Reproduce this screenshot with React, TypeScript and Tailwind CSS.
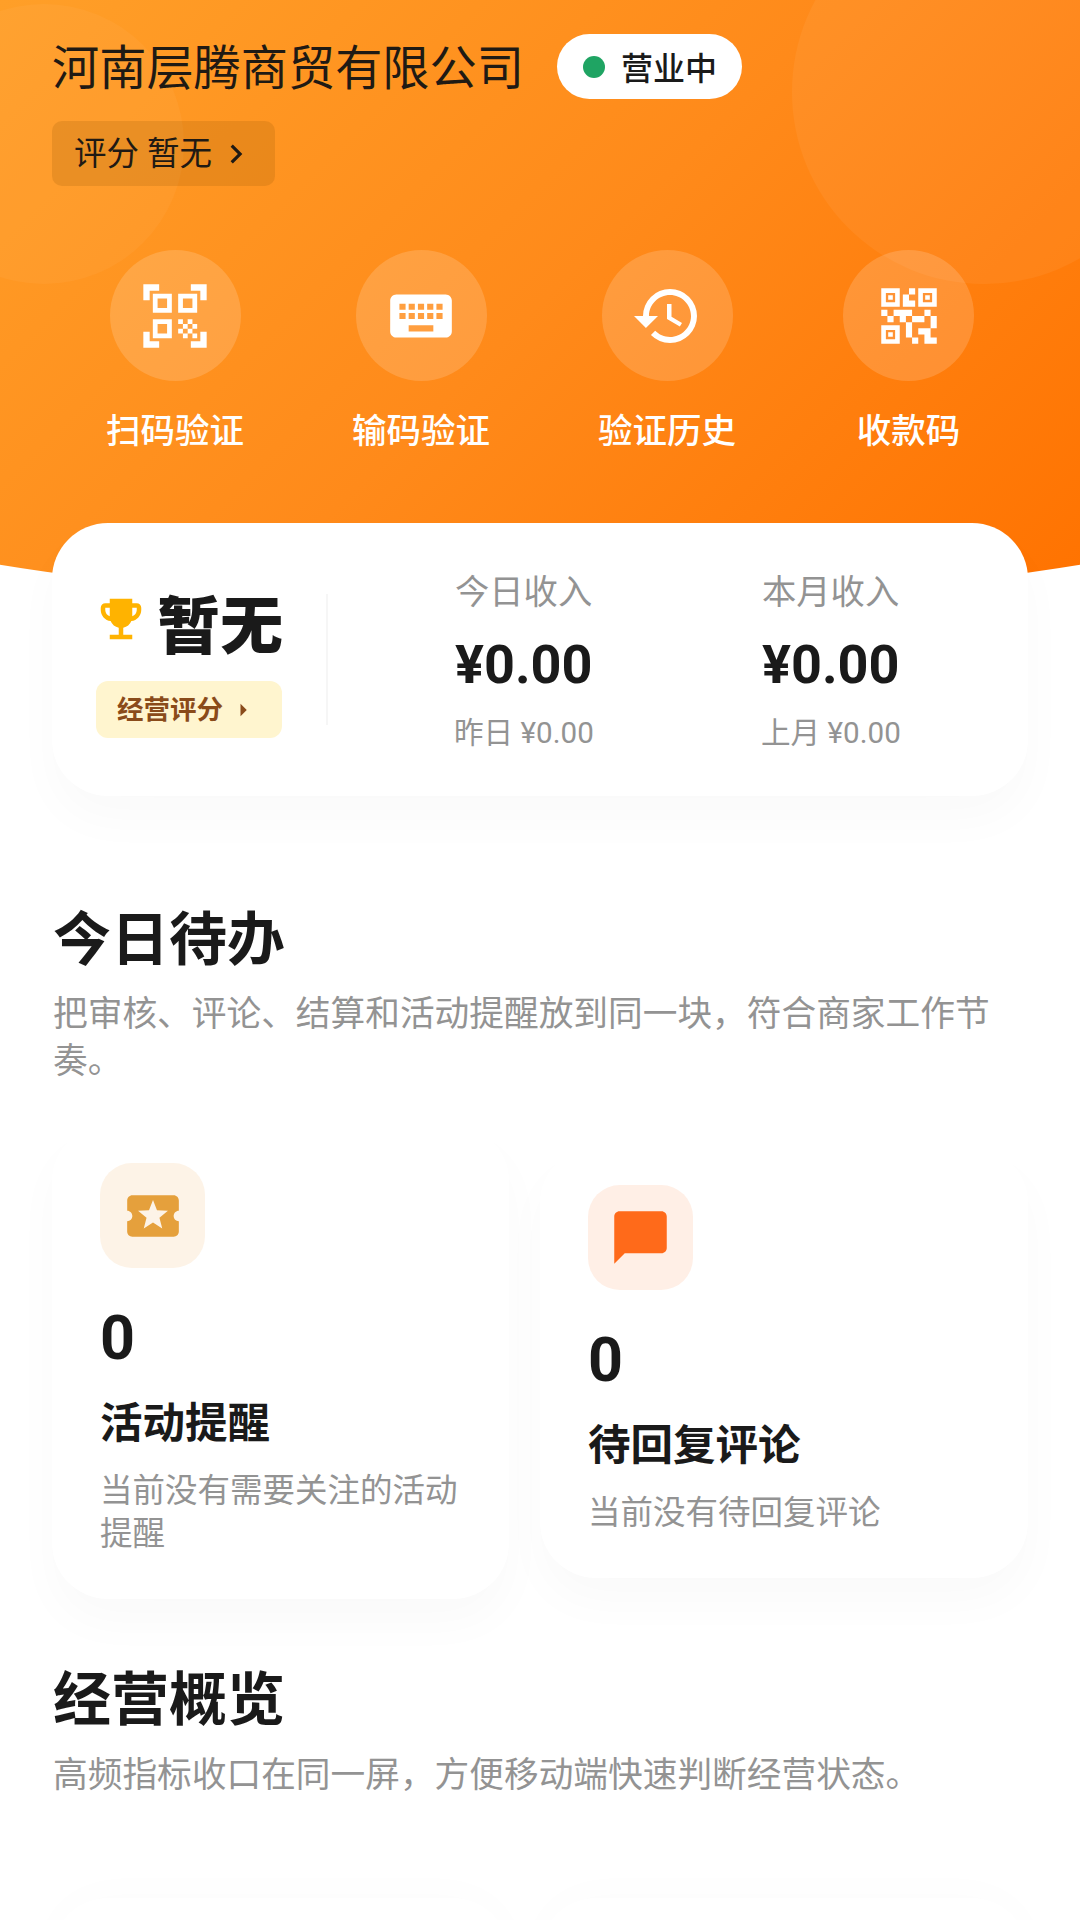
import { MdQrCodeScanner, MdKeyboard, MdHistory, MdQrCode2, MdEmojiEvents, MdLocalActivity, MdChatBubble, MdChevronRight, MdArrowRight } from "react-icons/md";
import type { ReactNode } from "react";

const actions = [
  { label: "扫码验证", icon: <MdQrCodeScanner size={76} />, extra: "" },
  { label: "输码验证", icon: <MdKeyboard size={74} />, extra: "" },
  { label: "验证历史", icon: <MdHistory size={72} />, extra: "" },
  { label: "收款码", icon: <MdQrCode2 size={74} />, extra: "-ml-[1px]" }
];

function Income({ title, sub, className }: { title: string; sub: string; className: string }) {
  return (
    <div className={className}>
      <div className="text-[34.3px] leading-[50px] text-[#939393]">{title}</div>
      <div className="mt-[16px] text-[54px] leading-[64px] font-bold text-[#1a1a1a]">¥0.00</div>
      <div className="mt-[16px] -ml-[1px] text-[29.6px] leading-[40px] text-[#939393] whitespace-nowrap">{sub}</div>
    </div>
  );
}

function TodoCard({ icon, iconBg, label, desc, className }: { icon: ReactNode; iconBg: string; label: string; desc: string; className: string }) {
  return (
    <div className={`bg-white rounded-[56px] pt-[38px] pb-[43px] px-[48px] shadow-[0_24px_48px_rgba(0,0,0,0.025)] ${className}`}>
      <div className={`w-[105px] h-[105px] rounded-[32px] flex items-center justify-center ${iconBg}`}>{icon}</div>
      <div className="mt-[34px] text-[61px] leading-[72px] font-bold text-[#1a1a1a]">0</div>
      <div className="mt-[22px] text-[42.5px] leading-[56px] font-bold text-[#1a1a1a]">{label}</div>
      <div className="mt-[18px] text-[32.5px] leading-[43px] text-[#939393]">{desc}</div>
    </div>
  );
}

export default function App() {
  return (
    <div className="w-[1080px] h-[1920px] overflow-hidden bg-white font-['Roboto','Noto_Sans_CJK_SC',sans-serif]">
      {/* ORANGE HEADER */}
      <header className="relative h-[607px] px-[52px] pt-[34px] overflow-hidden bg-[linear-gradient(135deg,#ff9f28_0%,#ff8a1a_50%,#ff7200_100%)] [clip-path:ellipse(1472px_607px_at_50%_0%)]">
        <div className="absolute left-[-96px] top-[4px] w-[280px] h-[280px] rounded-full bg-white/[0.04]"></div>
        <div className="absolute left-[792px] top-[-100px] w-[384px] h-[384px] rounded-full bg-white/[0.05]"></div>

        <div className="relative flex items-center gap-[33px]">
          <h1 className="h-[65px] text-[47.2px] leading-[71px] font-normal text-[#1f1a14] whitespace-nowrap">河南层腾商贸有限公司</h1>
          <div className="flex items-center h-[65px] w-[185px] pl-[26px] gap-[16px] rounded-full bg-white">
            <span className="w-[22px] h-[22px] rounded-full bg-[#1fa463]"></span>
            <span className="h-[65px] text-[32px] leading-[71px] font-medium text-[#1a1a1a]">营业中</span>
          </div>
        </div>

        <div className="relative mt-[22px] flex items-center w-[223px] h-[65px] pl-[22px] rounded-[10px] bg-[#7a4a00]/[0.16] text-[#1f1a14]">
          <span className="h-[65px] text-[32.5px] leading-[67px] whitespace-pre">评分 暂无</span>
          <MdChevronRight size={38} className="ml-[5px]" />
        </div>

        <div className="relative mt-[64px] ml-[54px] flex gap-[108px]">
          {actions.map((a) => (
            <div key={a.label} className={`flex flex-col items-center ${a.extra}`}>
              <div className="w-[131px] h-[131px] rounded-full bg-white/[0.16] flex items-center justify-center text-white">{a.icon}</div>
              <div className="mt-[26px] text-[34.5px] leading-[48px] font-medium text-white whitespace-nowrap">{a.label}</div>
            </div>
          ))}
        </div>
      </header>

      {/* SCORE AND INCOME CARD */}
      <section className="relative mx-[52px] -mt-[84px] h-[273px] rounded-[56px] bg-white shadow-[0_24px_48px_rgba(0,0,0,0.025)] flex">
        <div className="ml-[44px] mt-[73px] w-[186px]">
          <div className="flex items-start h-[62px]">
            <MdEmojiEvents size={54} className="text-[#ffb300] -ml-[2px] -mt-[4px] shrink-0" />
            <span className="ml-[9px] text-[63px] leading-[62px] font-black text-[#1a1a1a] whitespace-nowrap">暂无</span>
          </div>
          <div className="mt-[23px] flex items-center h-[57px] w-[186px] pl-[21px] rounded-[12px] bg-[#fff5cf] text-[#8a4b1a]">
            <span className="text-[26.5px] font-bold whitespace-nowrap">经营评分</span>
            <MdArrowRight size={30} className="ml-[5px]" />
          </div>
        </div>
        <div className="ml-[44px] mt-[71px] w-[2px] h-[131px] bg-[#f6f6f6]"></div>
        <Income title="今日收入" sub="昨日 ¥0.00" className="ml-[127px] pt-[44px] w-[307px]" />
        <Income title="本月收入" sub="上月 ¥0.00" className="pt-[44px]" />
      </section>

      {/* TODAY */}
      <section className="mx-[52px] mt-[108px]">
        <h2 className="pl-[1px] text-[58px] leading-[72px] font-bold text-[#1a1a1a]">今日待办</h2>
        <p className="mt-[15px] pl-[1px] text-[34.7px] leading-[47px] text-[#939393]">把审核、评论、结算和活动提醒放到同一块，符合商家工作节奏。</p>
        <div className="mt-[40px] flex items-center gap-[31px]">
          <TodoCard
            icon={<MdLocalActivity size={62} className="text-[#e5a03c]" />}
            iconBg="bg-[#fdf3e7]"
            label="活动提醒"
            desc="当前没有需要关注的活动提醒"
            className="w-[457px]"
          />
          <TodoCard
            icon={<MdChatBubble size={63} className="text-[#ff6a1a]" />}
            iconBg="bg-[#ffefe6]"
            label="待回复评论"
            desc="当前没有待回复评论"
            className="flex-1"
          />
        </div>
      </section>

      {/* OVERVIEW */}
      <section className="mx-[52px] mt-[65px]">
        <h2 className="pl-[1px] text-[58px] leading-[72px] font-bold text-[#1a1a1a]">经营概览</h2>
        <p className="mt-[16px] pl-[1px] text-[34.7px] leading-[47.5px] text-[#939393] whitespace-nowrap">高频指标收口在同一屏，方便移动端快速判断经营状态。</p>
        <div className="mt-[98px] flex gap-[31px]">
          <div className="w-[457px] h-[300px] rounded-[56px] bg-white shadow-[0_-4px_48px_rgba(0,0,0,0.015)]"></div>
          <div className="flex-1 h-[300px] rounded-[56px] bg-white shadow-[0_-4px_48px_rgba(0,0,0,0.015)]"></div>
        </div>
      </section>
    </div>
  );
}
